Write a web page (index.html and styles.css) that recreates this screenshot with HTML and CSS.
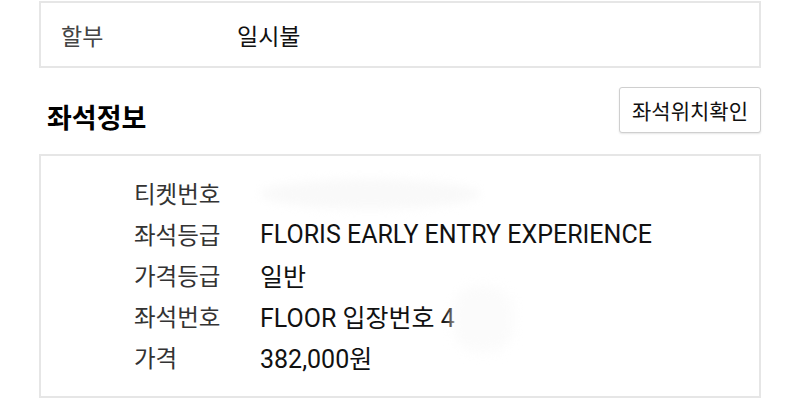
FILE: index.html
```html
<!DOCTYPE html>
<html lang="ko">
<head>
    <meta charset="UTF-8">
    <meta name="viewport" content="width=device-width, initial-scale=1.0">
    <title>좌석정보</title>
    <link rel="stylesheet" href="styles.css">
</head>
<body>
    <div class="page">
        <div class="box pay-box">
            <div class="pay-row">
                <span class="pay-label">할부</span>
                <span class="pay-value">일시불</span>
            </div>
        </div>

        <div class="section-head">
            <h2>좌석정보</h2>
            <button class="seat-btn">좌석위치확인</button>
        </div>

        <div class="box seat-box">
            <dl class="seat-list">
                <div class="seat-row">
                    <dt>티켓번호</dt>
                    <dd><span class="masked">&nbsp;</span></dd>
                </div>
                <div class="seat-row">
                    <dt>좌석등급</dt>
                    <dd>FLORIS EARLY ENTRY EXPERIENCE</dd>
                </div>
                <div class="seat-row">
                    <dt>가격등급</dt>
                    <dd>일반</dd>
                </div>
                <div class="seat-row">
                    <dt>좌석번호</dt>
                    <dd>FLOOR 입장번호 4</dd>
                </div>
                <div class="seat-row">
                    <dt>가격</dt>
                    <dd>382,000원</dd>
                </div>
            </dl>
            <span class="smudge"></span>
        </div>
    </div>
</body>
</html>
```

FILE: styles.css
```css
body {
    margin: 0;
    padding: 0;
    background: #fff;
    font-family: Roboto, "Noto Sans CJK KR", sans-serif;
    color: #111;
}

.page {
    margin: 0 39px;
    padding-top: 1px;
}

.box {
    border: 2px solid #e6e6e6;
    background: #fff;
    box-sizing: border-box;
}

.pay-box {
    height: 67px;
    display: flex;
    align-items: center;
    padding-left: 20px;
}

.pay-row {
    display: flex;
    font-size: 23px;
}

.pay-label {
    width: 176px;
    color: #444;
}

.pay-value {
    color: #111;
}

.section-head {
    display: flex;
    justify-content: space-between;
    align-items: flex-end;
    margin-top: 19px;
    margin-bottom: 21px;
    padding-left: 8px;
}

.section-head h2 {
    margin: 0 0 -4px;
    font-size: 27px;
    font-weight: bold;
    line-height: 1.3;
    color: #000;
}

.seat-btn {
    height: 46px;
    width: 142px;
    padding: 0;
    font-family: inherit;
    font-size: 21px;
    color: #111;
    background: #fff;
    border: 1px solid #cfcfcf;
    border-radius: 3px;
    box-shadow: 0 1px 2px rgba(0, 0, 0, 0.1);
}

.seat-box {
    position: relative;
    height: 244px;
    padding: 17px 0 0 93px;
}

.seat-list {
    margin: 0;
}

.seat-row {
    display: flex;
    height: 40.8px;
    align-items: center;
}

.seat-row dt {
    width: 126px;
    font-size: 23.5px;
    color: #333;
}

.seat-row dd {
    margin: 0;
    font-size: 25px;
    color: #111;
}

.masked {
    display: inline-block;
    width: 220px;
    height: 30px;
    background: #f9f9f9;
    border-radius: 50%;
    filter: blur(5px);
    vertical-align: middle;
}

.smudge {
    position: absolute;
    left: 412px;
    top: 130px;
    width: 60px;
    height: 66px;
    background: #fbfbfb;
    border-radius: 40%;
    filter: blur(6px);
}
```
